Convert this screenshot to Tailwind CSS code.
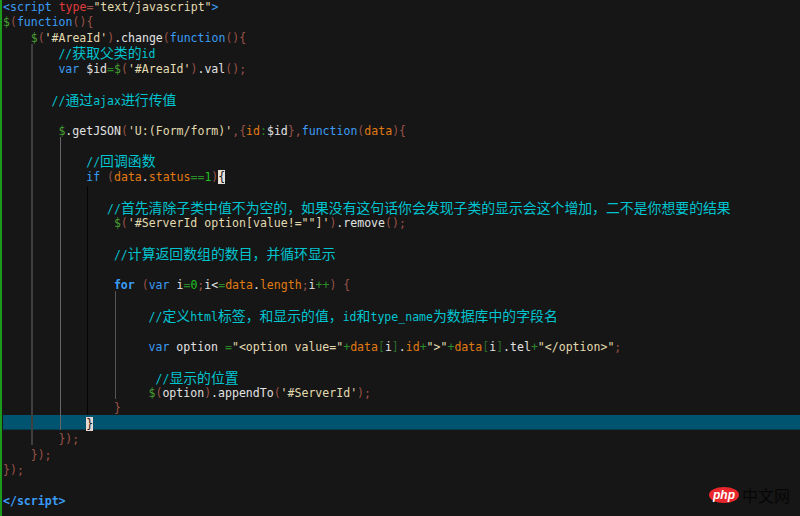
<!DOCTYPE html>
<html lang="zh-CN">
<head>
    <meta charset="UTF-8">
    <title>script</title>
    <script src="https://cdn.jsdelivr.net/npm/@tailwindcss/browser@4"></script>
</head>
<body class="bg-[#161616]">
    <div class="relative w-[800px] h-[516px] overflow-hidden bg-[#161616]">
        <!-- current line -->
        <div class="absolute left-[3px] right-0 top-[415px] h-[15px] bg-[#005470] border-b border-[#0d3a4a]"></div>
        <!-- green change bar -->
        <div class="absolute left-0 top-0 w-[2px] h-[516px] bg-[#1d9a1d]"></div>
        <!-- indent guides -->
        <div class="absolute left-[31px] top-[44px] w-[2px] h-[401px] bg-[#3f3f3f]"></div>
        <div class="absolute left-[60px] top-[137px] w-[1px] h-[293px] bg-[#666666]"></div>
        <div class="absolute left-[87px] top-[186px] w-[1px] h-[229px] bg-[#050505]"></div>
        <div class="absolute left-[115px] top-[291px] w-[1px] h-[108px] bg-[#555555]"></div>

        <!-- code -->
        <div class="relative flex flex-col pl-[3px] font-['DejaVu_Sans_Mono','Noto_Sans_CJK_SC',monospace] text-[11.55px] leading-[15.44px] whitespace-pre text-[#e2e2e2]">
            <div class="h-[15.44px]"><span class="text-[#3b9cf5]">&lt;script</span> <span class="text-[#e03c3c]">type</span><span class="text-[#9a5348]">=</span><span class="text-[#e2dab0]">"text/javascript"</span><span class="text-[#3b9cf5]">&gt;</span></div>
            <div class="h-[15.44px]"><span class="text-[#46a032]">$</span><span class="text-[#9a5348]">(</span><span class="text-[#3b9cf5]">function</span><span class="text-[#9a5348]">(){</span></div>
            <div class="h-[15.44px] pl-[27.7px]"><span class="text-[#46a032]">$</span><span class="text-[#9a5348]">(</span><span class="text-[#e2dab0]">'#AreaId'</span><span class="text-[#9a5348]">)</span>.change<span class="text-[#9a5348]">(</span><span class="text-[#3b9cf5]">function</span><span class="text-[#9a5348]">(){</span></div>
            <div class="h-[15.44px] pl-[55.4px] text-[#00c4d0]">//<span class="text-[13.86px]">获取父类的</span>id</div>
            <div class="h-[15.44px] pl-[55.4px]"><span class="text-[#3b9cf5]">var</span> $id<span class="text-[#2a8a2a]">=</span><span class="text-[#46a032]">$</span><span class="text-[#9a5348]">(</span><span class="text-[#e2dab0]">'#AreaId'</span><span class="text-[#9a5348]">)</span>.val<span class="text-[#9a5348]">();</span></div>
            <div class="h-[15.44px]"></div>
            <div class="h-[15.44px] pl-[48.5px] text-[#00c4d0]">//<span class="text-[13.86px]">通过</span>ajax<span class="text-[13.86px]">进行传值</span></div>
            <div class="h-[15.44px]"></div>
            <div class="h-[15.44px] pl-[55.4px]"><span class="text-[#46a032]">$</span>.getJSON<span class="text-[#9a5348]">(</span><span class="text-[#e2dab0]">'U:(Form/form)'</span><span class="text-[#9a5348]">,{</span><span class="text-[#e07a12]">id</span><span class="text-[#2a8a2a]">:</span>$id<span class="text-[#9a5348]">},</span><span class="text-[#3b9cf5]">function</span><span class="text-[#9a5348]">(</span><span class="text-[#e07a12]">data</span><span class="text-[#9a5348]">){</span></div>
            <div class="h-[15.44px]"></div>
            <div class="h-[15.44px] pl-[83.2px] text-[#00c4d0]">//<span class="text-[13.86px]">回调函数</span></div>
            <div class="h-[15.44px] pl-[83.2px]"><span class="text-[#3b9cf5]">if</span> <span class="text-[#9a5348]">(</span><span class="text-[#e07a12]">data</span>.<span class="text-[#e07a12]">status</span><span class="text-[#2a8a2a]">==</span><span class="text-[#22c022]">1</span><span class="text-[#9a5348]">)</span><span class="bg-[#e8e0d8] text-[#161616]">{</span></div>
            <div class="h-[15.44px]"></div>
            <div class="h-[15.44px] pl-[104px] text-[#00c4d0]">//<span class="text-[13.86px]">首先清除子类中值不为空的，如果没有这句话你会发现子类的显示会这个增加，二不是你想要的结果</span></div>
            <div class="h-[15.44px] pl-[110.9px]"><span class="text-[#46a032]">$</span><span class="text-[#9a5348]">(</span><span class="text-[#e2dab0]">'#ServerId option[value!=""]'</span><span class="text-[#9a5348]">)</span>.remove<span class="text-[#9a5348]">();</span></div>
            <div class="h-[15.44px]"></div>
            <div class="h-[15.44px] pl-[110.9px] text-[#00c4d0]">//<span class="text-[13.86px]">计算返回数组的数目，并循环显示</span></div>
            <div class="h-[15.44px]"></div>
            <div class="h-[15.44px] pl-[110.9px]"><span class="text-[#3b9cf5] font-bold">for</span> <span class="text-[#9a5348]">(</span><span class="text-[#3b9cf5]">var</span> i<span class="text-[#2a8a2a]">=</span><span class="text-[#22c022]">0</span><span class="text-[#9a5348]">;</span>i&lt;<span class="text-[#2a8a2a]">=</span><span class="text-[#e07a12]">data</span>.<span class="text-[#e07a12]">length</span><span class="text-[#9a5348]">;</span>i<span class="text-[#2a8a2a]">++</span><span class="text-[#9a5348]">) {</span></div>
            <div class="h-[15.44px]"></div>
            <div class="h-[15.44px] pl-[145.5px] text-[#00c4d0]">//<span class="text-[13.86px]">定义</span>html<span class="text-[13.86px]">标签，和显示的值，</span>id<span class="text-[13.86px]">和</span>type_name<span class="text-[13.86px]">为数据库中的字段名</span></div>
            <div class="h-[15.44px]"></div>
            <div class="h-[15.44px] pl-[145.5px]"><span class="text-[#3b9cf5]">var</span> option <span class="text-[#2a8a2a]">=</span><span class="text-[#e2dab0]">"&lt;option value="</span><span class="text-[#2a8a2a]">+</span><span class="text-[#e07a12]">data</span><span class="text-[#2a6a2a]">[</span>i<span class="text-[#2a6a2a]">]</span>.<span class="text-[#e07a12]">id</span><span class="text-[#2a8a2a]">+</span><span class="text-[#e2dab0]">"&gt;"</span><span class="text-[#2a8a2a]">+</span><span class="text-[#e07a12]">data</span><span class="text-[#2a6a2a]">[</span>i<span class="text-[#2a6a2a]">]</span>.tel<span class="text-[#2a8a2a]">+</span><span class="text-[#e2dab0]">"&lt;/option&gt;"</span><span class="text-[#9a5348]">;</span></div>
            <div class="h-[15.44px]"></div>
            <div class="h-[15.44px] pl-[152.5px] text-[#00c4d0]">//<span class="text-[13.86px]">显示的位置</span></div>
            <div class="h-[15.44px] pl-[145.5px]"><span class="text-[#46a032]">$</span><span class="text-[#9a5348]">(</span>option<span class="text-[#9a5348]">)</span>.appendTo<span class="text-[#9a5348]">(</span><span class="text-[#e2dab0]">'#ServerId'</span><span class="text-[#9a5348]">);</span></div>
            <div class="h-[15.44px] pl-[110.9px] text-[#9a5348]">}</div>
            <div class="h-[15.44px] pl-[83.2px]"><span class="bg-[#e8d8d0] text-[#161616]">}</span></div>
            <div class="h-[15.44px] pl-[55.4px] text-[#9a5348]">});</div>
            <div class="h-[15.44px] pl-[27.7px] text-[#9a5348]">});</div>
            <div class="h-[15.44px] text-[#9a5348]">});</div>
            <div class="h-[15.44px]"></div>
            <div class="h-[15.44px] text-[#3b9cf5] font-bold">&lt;/script&gt;</div>
        </div>

        <!-- watermark -->
        <div class="absolute left-[709px] top-[487px] flex items-center gap-[3px]">
            <div class="w-[30px] h-[16px] rounded-[50%] bg-[#e8262c] flex items-center justify-center font-['Liberation_Sans',sans-serif] italic font-bold text-[12px] leading-none text-white">php</div>
            <div class="font-['Noto_Sans_CJK_SC',sans-serif] text-[16px] leading-none text-[#060606]">中文网</div>
        </div>
    </div>
</body>
</html>
